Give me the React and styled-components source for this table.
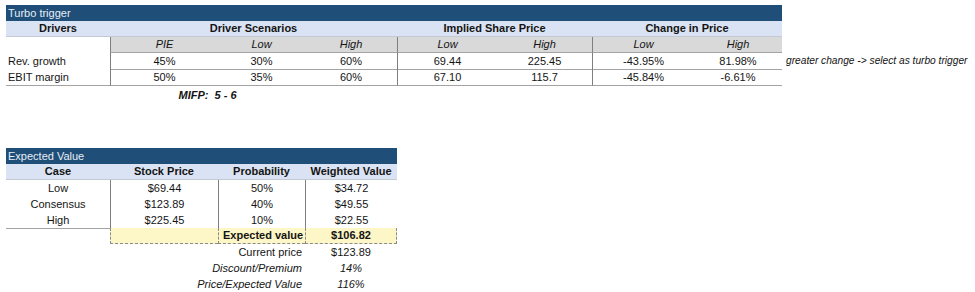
import React from 'react';
import styled, { createGlobalStyle } from 'styled-components';

const GlobalStyle = createGlobalStyle`
    body {
        margin: 0;
        background: #ffffff;
        font-family: "Liberation Sans", Arial, sans-serif;
        font-size: 11px;
        color: #141414;
    }
`;

const TOP_COLS = '104px 108px 87px 92px 100px 95px 102px 88px auto';
const EV_COLS = '104px 108px 87px 92px';

const LINE = '#a3a3a3';
const VLINE = '#7f7f7f';

const Page = styled.div`
    padding: 5px 0 0 6px;
    display: flex;
    flex-direction: column;
`;

const Table = styled.div`
    display: flex;
    flex-direction: column;
    margin-top: ${p => p.$top || 0}px;
`;

const Row = styled.div`
    display: grid;
    grid-template-columns: ${p => p.$cols};
    height: 16px;
    margin-top: ${p => p.$gap || 0}px;
`;

const TitleBar = styled.div`
    grid-column: span ${p => p.$span};
    background: #1f4e79;
    color: #e8eef5;
    padding-left: 2px;
    line-height: 16px;
    white-space: nowrap;
`;

const HeadCell = styled.div`
    grid-column: span ${p => p.$span || 1};
    background: #dae3f3;
    font-weight: 700;
    text-align: center;
    line-height: 15px;
    border-bottom: 1px solid #c4c9d2;
    box-sizing: border-box;
    white-space: nowrap;
`;

const SubHead = styled.div`
    background: ${p => (p.$blank ? '#ffffff' : '#d9d9d9')};
    font-style: italic;
    text-align: center;
    line-height: 15px;
    box-sizing: border-box;
    border-bottom: ${p => (p.$blank ? 'none' : `1px solid ${LINE}`)};
    border-left: ${p => (p.$sep ? `1px solid ${VLINE}` : 'none')};
`;

const Cell = styled.div`
    grid-column: span ${p => p.$span || 1};
    box-sizing: border-box;
    line-height: 16px;
    white-space: nowrap;
    text-align: ${p => p.$align || 'center'};
    padding: ${p => (p.$align === 'left' ? '0 0 0 2px' : p.$align === 'right' ? '0 3px 0 0' : '0')};
    font-style: ${p => (p.$italic ? 'italic' : 'normal')};
    font-weight: ${p => (p.$bold ? 700 : 400)};
    border-left: ${p => (p.$sep ? `1px solid ${VLINE}` : 'none')};
    border-bottom: ${p => (p.$under ? `1px solid ${LINE}` : 'none')};
`;

const TotalCell = styled(Cell)`
    background: #fdf6c6;
    border-left: 1px dashed #8a8a8a;
    border-bottom: 1px dashed #8a8a8a;
    border-right: ${p => (p.$last ? '1px dashed #8a8a8a' : 'none')};
    line-height: 15px;
    padding-left: ${p => (p.$align === 'left' ? '4px' : '0')};
`;

const Note = styled.div`
    font-style: italic;
    font-size: 10.2px;
    padding-left: 4px;
    line-height: 16px;
    white-space: nowrap;
`;

const drivers = [
    { name: 'Rev. growth', pie: '45%', low: '30%', high: '60%', pLow: '69.44', pHigh: '225.45', cLow: '-43.95%', cHigh: '81.98%', note: 'greater change -> select as turbo trigger' },
    { name: 'EBIT margin', pie: '50%', low: '35%', high: '60%', pLow: '67.10', pHigh: '115.7', cLow: '-45.84%', cHigh: '-6.61%' },
];

const cases = [
    { name: 'Low', price: '$69.44', prob: '50%', value: '$34.72' },
    { name: 'Consensus', price: '$123.89', prob: '40%', value: '$49.55' },
    { name: 'High', price: '$225.45', prob: '10%', value: '$22.55' },
];

const extras = [
    { label: 'Current price', value: '$123.89' },
    { label: 'Discount/Premium', value: '14%', italic: true },
    { label: 'Price/Expected Value', value: '116%', italic: true },
];

const TurboTrigger = () => (
    <Table>
        <Row $cols={TOP_COLS}>
            <TitleBar $span={8}>Turbo trigger</TitleBar>
        </Row>
        <Row $cols={TOP_COLS}>
            <HeadCell>Drivers</HeadCell>
            <HeadCell $span={3}>Driver Scenarios</HeadCell>
            <HeadCell $span={2}>Implied Share Price</HeadCell>
            <HeadCell $span={2}>Change in Price</HeadCell>
        </Row>
        <Row $cols={TOP_COLS}>
            <SubHead $blank />
            <SubHead $sep>PIE</SubHead>
            <SubHead>Low</SubHead>
            <SubHead>High</SubHead>
            <SubHead $sep>Low</SubHead>
            <SubHead>High</SubHead>
            <SubHead $sep>Low</SubHead>
            <SubHead>High</SubHead>
        </Row>
        {drivers.map((d, i) => {
            const last = i === drivers.length - 1;
            return (
                <Row $cols={TOP_COLS} key={d.name}>
                    <Cell $align="left" $under={last}>{d.name}</Cell>
                    <Cell $sep $under>{d.pie}</Cell>
                    <Cell $under>{d.low}</Cell>
                    <Cell $under>{d.high}</Cell>
                    <Cell $sep $under>{d.pLow}</Cell>
                    <Cell $under>{d.pHigh}</Cell>
                    <Cell $sep $under>{d.cLow}</Cell>
                    <Cell $under>{d.cHigh}</Cell>
                    {d.note && <Note>{d.note}</Note>}
                </Row>
            );
        })}
        <Row $cols={TOP_COLS} $gap={2}>
            <Cell />
            <Cell $span={2} $bold $italic>MIFP:&nbsp; 5 - 6</Cell>
        </Row>
    </Table>
);

const ExpectedValue = () => (
    <Table $top={45}>
        <Row $cols={EV_COLS}>
            <TitleBar $span={4}>Expected Value</TitleBar>
        </Row>
        <Row $cols={EV_COLS}>
            <HeadCell>Case</HeadCell>
            <HeadCell>Stock Price</HeadCell>
            <HeadCell>Probability</HeadCell>
            <HeadCell>Weighted Value</HeadCell>
        </Row>
        {cases.map((c, i) => {
            const last = i === cases.length - 1;
            return (
                <Row $cols={EV_COLS} key={c.name}>
                    <Cell $under={last}>{c.name}</Cell>
                    <Cell $sep $under={last}>{c.price}</Cell>
                    <Cell $sep $under={last}>{c.prob}</Cell>
                    <Cell $sep $under={last}>{c.value}</Cell>
                </Row>
            );
        })}
        <Row $cols={EV_COLS}>
            <Cell />
            <TotalCell />
            <TotalCell $align="left" $bold>Expected value</TotalCell>
            <TotalCell $bold $last>$106.82</TotalCell>
        </Row>
        {extras.map(x => (
            <Row $cols={EV_COLS} key={x.label}>
                <Cell />
                <Cell $span={2} $align="right" $italic={x.italic}>{x.label}</Cell>
                <Cell $italic={x.italic}>{x.value}</Cell>
            </Row>
        ))}
    </Table>
);

const App = () => (
    <>
        <GlobalStyle />
        <Page>
            <TurboTrigger />
            <ExpectedValue />
        </Page>
    </>
);

export default App;
